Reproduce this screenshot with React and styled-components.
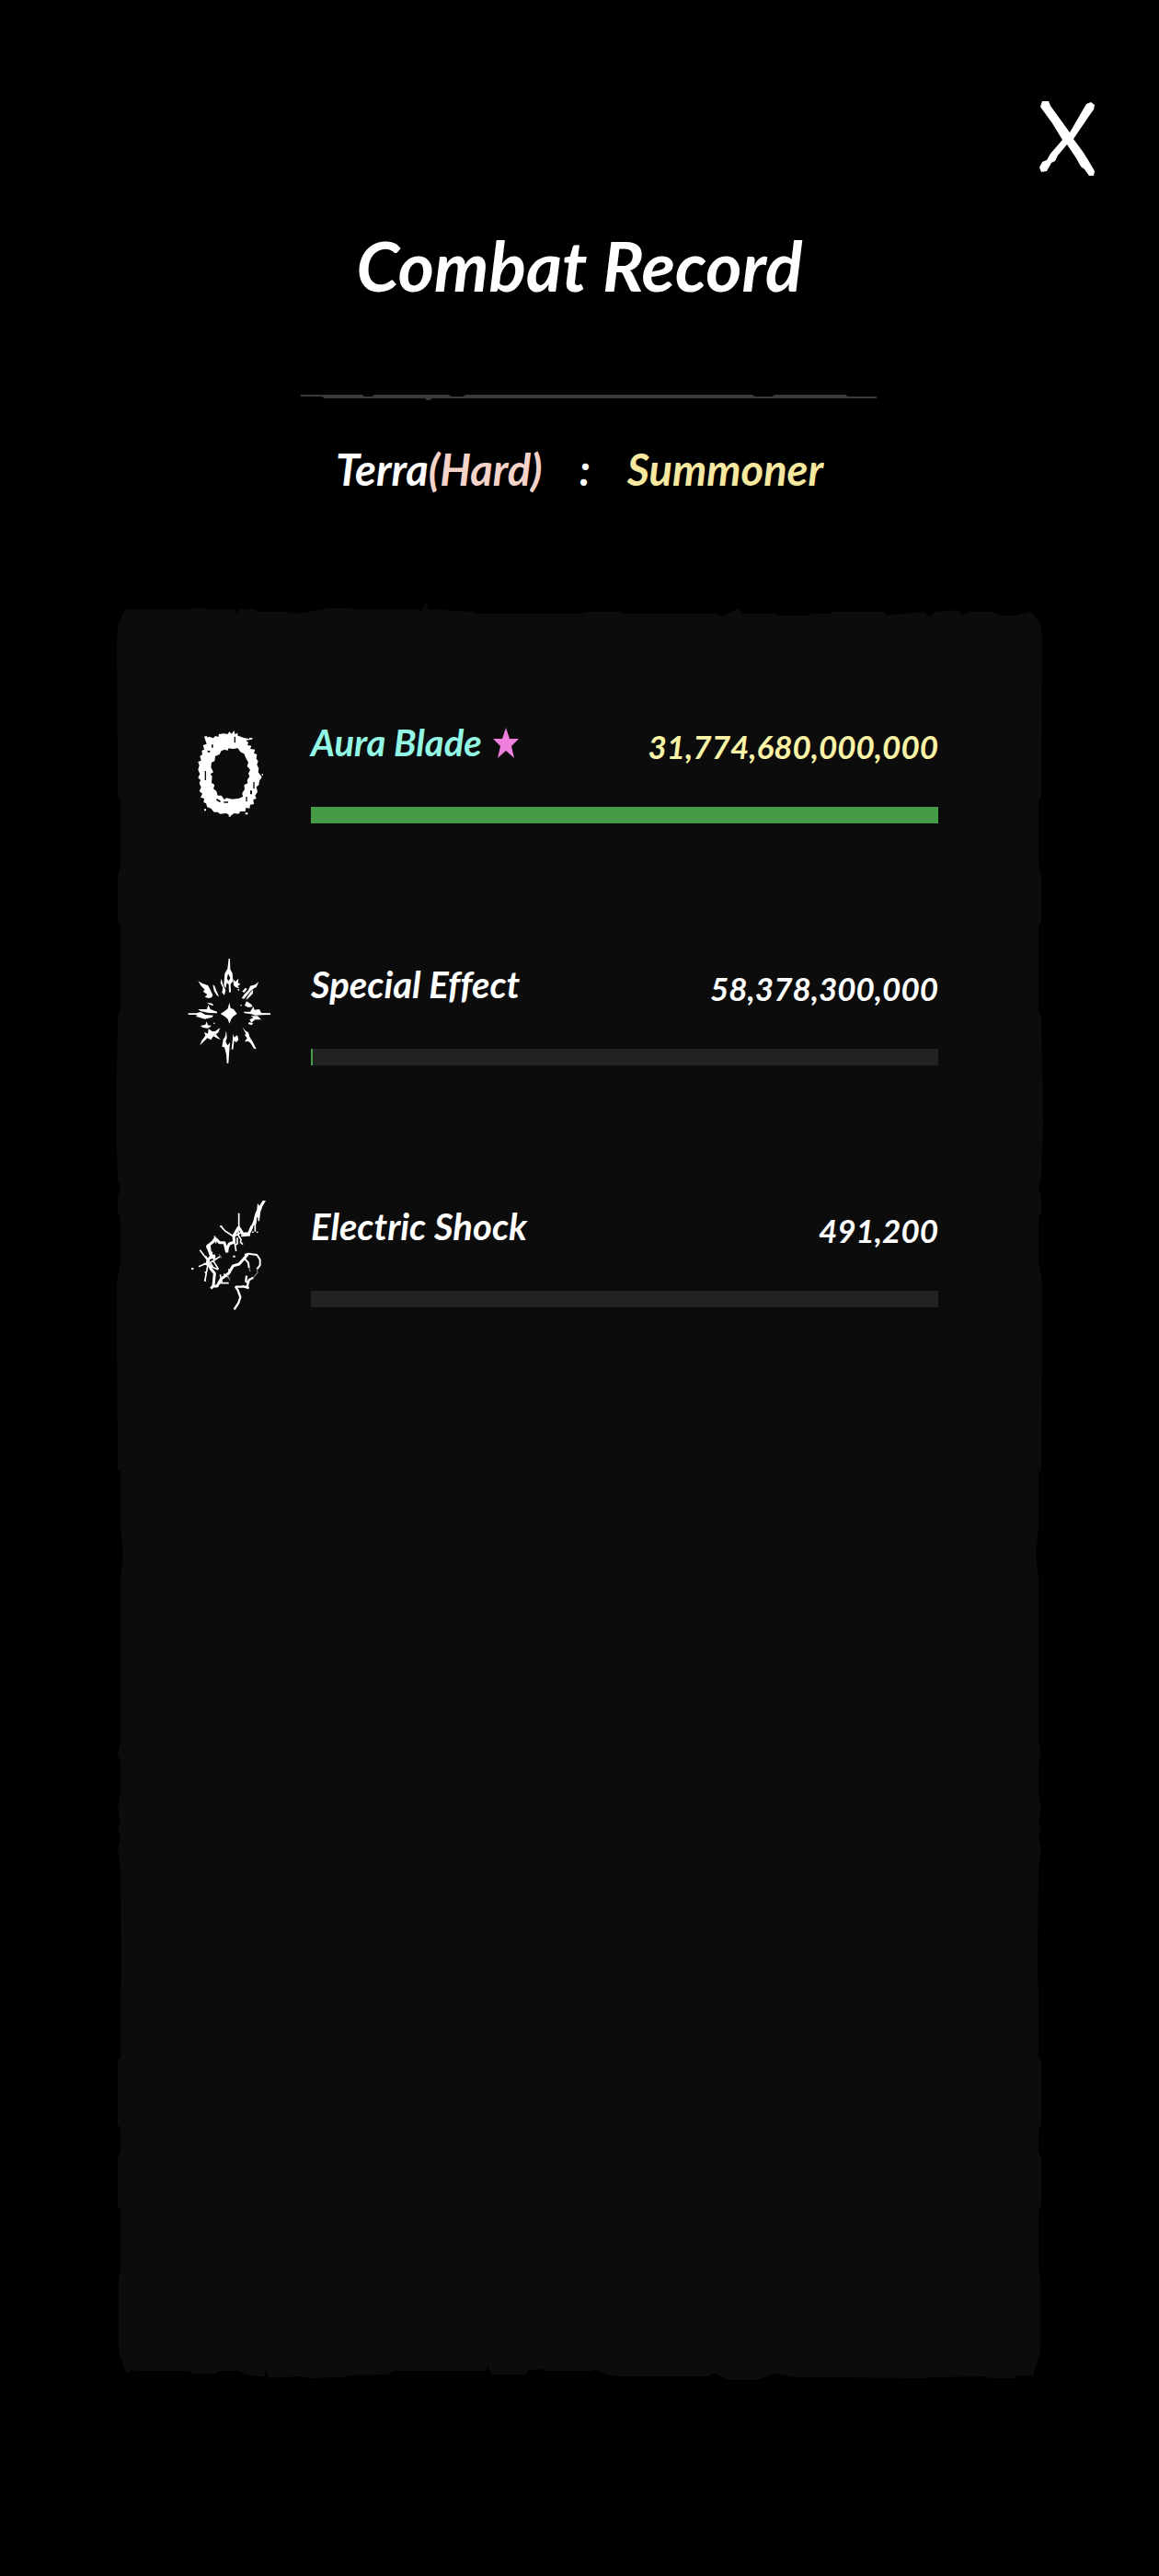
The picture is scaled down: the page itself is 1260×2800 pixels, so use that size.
import React from 'react';
import styled, { createGlobalStyle } from 'styled-components';

const records = [
  { name: 'Aura Blade', damage: 31774680000000, icon: 'aura', best: true },
  { name: 'Special Effect', damage: 58378300000, icon: 'burst' },
  { name: 'Electric Shock', damage: 491200, icon: 'shock' },
];

// Torn paper outline: [percent along the edge, px cut in from it]
const topEdge = [
  [1, 7], [8, 7], [9, 6], [10, 7], [12.9, 7], [13, 12], [13.3, 7], [15, 7],
  [15.3, 10], [18.2, 10], [19.4, 12], [21.4, 9], [23.1, 6], [24.9, 6],
  [25.2, 7], [32.6, 7], [32.9, 11], [33.4, 0], [33.7, 7], [38.6, 10],
  [38.7, 12], [50.3, 12], [50.4, 10], [54.5, 10], [54.7, 12], [64.9, 12],
  [65.3, 15], [67.2, 6], [67.5, 12], [71.2, 12], [71.4, 14], [74.8, 14],
  [75, 12], [77.1, 12], [77.3, 10], [82.9, 10], [83.1, 14], [87.2, 10],
  [87.7, 16], [88.4, 10], [90.9, 8], [91.2, 15], [91.9, 10], [94.4, 10],
  [95.6, 14], [97.1, 14], [98.7, 10],
];

const bottomEdge = [
  [1, 10], [1.4, 8], [1.7, 12], [2, 10], [7.9, 10], [8.2, 7], [10.9, 7],
  [11.2, 10], [13.4, 10], [13.7, 7], [14.9, 4], [16, 4], [16.2, 12],
  [16.5, 2], [19.7, 4], [21, 2], [24.6, 3], [24.9, 5], [29.3, 6],
  [30, 10], [39.9, 10], [40.1, 16], [40.5, 6], [44.3, 6], [44.5, 11],
  [46.2, 12], [46.4, 10], [51.4, 10], [51.6, 12], [53, 6], [54.4, 4],
  [63.9, 4], [64.4, 8], [66.2, 0], [69.1, 0], [71.1, 7], [73.4, 3],
  [87.2, 2], [87.7, 3], [93.8, 4], [94.2, 2], [96.9, 2], [97.1, 5],
  [98.9, 4],
];

const sideEdge = [
  [1.2, 3], [2, 1], [11, 2], [11.1, 5], [14.8, 5], [15.4, 2], [18, 2],
  [18.2, 5], [22.9, 5], [23.3, 2], [29.2, 0], [32.4, 2], [32.9, 5],
  [33.4, 2], [34.3, 2], [34.6, 5], [37.2, 5], [38.2, 1], [41.4, 1],
  [48.8, 2], [48.9, 5], [52, 5], [53.6, 8], [54.8, 5], [64.1, 5],
  [64.8, 2], [65.2, 5], [67, 5], [67.8, 2], [68.7, 5], [68.9, 2],
  [69.5, 5], [70.1, 2], [71.2, 5], [77.2, 6], [78.2, 5], [81.9, 5],
  [82, 2], [85.6, 2], [85.9, 5], [87.2, 5], [87.5, 2], [90.2, 2],
  [90.4, 5], [93.9, 5], [94.2, 3], [98.4, 3],
];

const tornOutline = [
  ...topEdge.map(([x, y]) => `${x}% ${y}px`),
  ...sideEdge.map(([y, x]) => `calc(100% - ${x}px) ${y}%`),
  ...[...bottomEdge].reverse().map(([x, y]) => `${x}% calc(100% - ${y}px)`),
  ...[...sideEdge].reverse().map(([y, x]) => `${x}px ${y}%`),
].join(', ');

const AuraIcon = () => (
  <RecordIcon viewBox="42 27 270 360" aria-hidden="true">
    <path
      fillRule="evenodd"
      d="M112 92L125 97L133 90L142 93L144 84L160 82L172 84L178 76L185 83L194 72L196 84L206 80L204 88L215 92L226 96L252 101L232 104L240 112L237 120L250 122L246 132L262 134L258 146L268 150L266 164L272 172L268 184L274 196L272 208L284 224L276 236L274 250L266 256L270 272L262 284L266 294L256 298L258 312L246 314L244 326L232 324L230 336L214 336L208 344L194 342L182 350L168 342L148 344L140 338L128 338L118 326L106 322L102 310L94 306L96 294L84 290L90 278L80 270L86 258L80 244L84 234L76 226L82 214L76 200L80 186L76 174L86 170L82 156L90 150L88 138L96 134L92 120L104 116L98 98Z
      M172 138L176 130L188 132L206 130L214 142L226 148L232 162L240 176L236 188L246 200L240 212L244 222L236 234L238 244L226 250L228 264L220 276L222 288L208 294L188 296L168 292L162 298L152 284L140 284L136 270L126 262L130 250L120 242L122 222L116 214L126 208L118 192L120 176L130 172L132 156L146 150L152 138L164 134Z
      M98 204h4v30h-4zM107 138h8v5h-8zM120 118h5v10h-5zM194 92h4v20h-4zM256 240h4v22h-4zM246 268h6v12h-6zM232 288h4v16h-4zM138 294l12 8l-3 5l-12 -8zM160 304h14v4h-14z"
    />
    <path d="M97 91h9v7h-9zM96 328h6v6h-6zM230 340h8v6h-8zM284 214h4v5h-4zM176 348h6v5h-6zM243 96h10v5h-10z" />
  </RecordIcon>
);

const BurstIcon = () => (
  <RecordIcon viewBox="42 63 270 360" aria-hidden="true">
    <path d="M178 206L182 224L192 228L203 243L190 252L184 260L178 275L173 260L164 252L149 243L164 233L173 226Z" />
    <path d="M176 62h4L181 98L188 110L190 136L182 146L183 172L177 174L176 148L170 142L166 160L160 150L163 112L172 96ZM174 112L170 128L176 136L181 126Z" fillRule="evenodd" />
    <path d="M152 128L158 150L166 166L162 182L154 174L157 158L149 142ZM190 130L198 138L208 128L206 142L214 146L206 152L210 160L198 156L192 150Z" />
    <path d="M76 136L90 144L108 150L116 164L124 182L120 190L110 192L98 188L106 180L92 170L98 164L86 152ZM124 148L130 152L136 168L144 186L138 184L128 168Z" />
    <path d="M274 138L266 156L258 160L246 170L236 182L226 194L218 192L228 178L240 166L246 152L262 148ZM256 164L254 178L242 190L232 198L236 188L246 174ZM220 170L230 158L236 162L226 174Z" />
    <path d="M234 202L250 212L254 220L240 222L228 216ZM106 206l16 3l2 6l-12 -3z" />
    <path d="M76 228L104 228L110 214L116 228L138 236L138 241L110 240L84 234ZM44 241L70 241L84 237L100 246L126 248L122 254L98 260L84 256L70 252L72 246L44 246Z" />
    <path d="M224 236L246 236L256 220L260 230L276 228L282 240L312 241L312 246L284 247L262 248L250 244L228 241ZM248 250L270 250L282 262L262 262L250 272L244 262L256 256Z" />
    <path d="M84 282L100 278L104 268L108 280L120 282L108 290L92 288ZM242 270l14 4l-6 6l-10 -4z" />
    <path d="M148 288L142 304L134 310L150 328L136 322L126 316L118 328L106 322L98 330L82 346L88 330L100 314L96 302L108 308L110 292L122 300L132 300Z" />
    <path d="M220 286L230 298L240 304L244 318L254 334L266 358L258 356L248 340L240 332L228 334L236 322L228 312L232 308Z" />
    <path d="M168 298L170 322L166 334L172 346L180 336L178 362L175 404L170 404L168 376L162 352L154 350L158 326L164 318ZM190 308L194 320L204 312L208 328L200 336L194 330L190 360L185 358L188 334Z" />
    <path d="M118 212h8v3h-8zM206 162h4v5h-4zM126 272h5v3h-5zM214 214h5v3h-5z" />
  </RecordIcon>
);

const ShockIcon = () => (
  <RecordIcon viewBox="42 69 270 360" aria-hidden="true">
    <path d="M290 64L297 69L286 88L279 108L277 128L268 122L266 144L256 152L250 170L243 166L256 136L262 112L268 98L270 78L276 86Z" />
    <Bolt $width={9} d="M252 152L242 176L222 178L214 164L208 156L192 184L194 204L178 210L172 222L170 238M170 238L162 206L146 206L132 192L124 204L106 218L116 240L130 260" />
    <Bolt $width={5} d="M209 110L209 160M150 152L164 168L192 186M206 156L208 184L216 196L214 208M194 198L200 234M216 206L222 212M192 186L220 172M204 190L204 210L196 214M216 184L246 182M262 140L262 170M272 90L274 136M254 170L256 174M268 170L270 174M130 184L134 208" />
    <Bolt $width={9} d="M132 248L112 258L106 268L118 292L130 306L126 346L118 356M124 348L138 348L150 326L176 306L190 282L210 276L228 256L238 244M112 214L116 246" />
    <Bolt $width={5} d="M82 230L106 262M78 284L106 272M108 278L98 332M94 274L142 294M110 262L122 236M118 270L150 250M148 310L154 336M146 338L176 338M160 308L174 318M126 266L142 292M100 250L124 284M176 292L180 306" />
    <Bolt $width={6} d="M226 256L240 272L242 288M228 246L240 242L268 246L278 262L278 280L268 292" />
    <Bolt $width={4} $faint d="M268 292L270 304L256 320M242 288L246 300M152 256L144 244M172 312L180 328" />
    <Bolt $width={7} d="M256 320L242 328L236 350L198 350L206 362L214 384L208 402L194 424M234 314L232 332L242 338M220 348L242 354" />
    <path d="M54 288h7v6h-7zM190 248h7v6h-7zM148 150h6v6h-6zM98 300h5v6h-5zM96 326h5v6h-5z" />
  </RecordIcon>
);

const icons = { aura: AuraIcon, burst: BurstIcon, shock: ShockIcon };

const App = () => {
  const highest = Math.max(...records.map((record) => record.damage));

  return (
    <Page>
      <GlobalStyle />
      <CloseButton type="button" aria-label="Close">
        <svg width="64" height="88" viewBox="0 0 64 88" aria-hidden="true">
          <path d="M4 4L11 4L13 9L34 38L52 7L57 5L61 8L60 13L55 20L38 45L49 60L57 73L61 80L60 85L55 85L50 78L46 75L41 66L31 51L21 63L18 69L14 71L9 80L3 81L1 76L4 70L9 68L13 61L26 46L15 28L7 17L2 10Z" />
        </svg>
      </CloseButton>
      <Title>Combat Record</Title>
      <Divider viewBox="0 0 626 8" aria-hidden="true">
        <path d="M0 2h67l2 2h8l3-2h81l3 2h12l3-2h312l3 2h18l3-2h77l3 2h31v2H143l-3 2h-3l-2-2H26l-3-2L0 4z" />
      </Divider>
      <Stage>
        <span>
          Terra<Difficulty>(Hard)</Difficulty>
        </span>
        <span>:</span>
        <JobName>Summoner</JobName>
      </Stage>
      <Panel>
        {records.map((record) => {
          const Icon = icons[record.icon];
          const share = (record.damage / highest) * 100;
          return (
            <RecordRow key={record.name}>
              <Icon />
              <RecordBody>
                <RecordHead>
                  <RecordName $best={record.best}>
                    {record.name}
                    {record.best && (
                      <Star viewBox="0 0 28 33" aria-hidden="true">
                        <path d="M14 0L18 12L28 12L20 20L23 33L14 25L5 33L8 20L0 12L10 12Z" />
                      </Star>
                    )}
                  </RecordName>
                  <Damage $best={record.best}>{record.damage.toLocaleString('en-US')}</Damage>
                </RecordHead>
                <Track role="progressbar" aria-label={record.name} aria-valuenow={Math.round(share)}>
                  <Fill $sliver={share > 0.1} style={{ width: `${share}%` }} />
                </Track>
              </RecordBody>
            </RecordRow>
          );
        })}
      </Panel>
    </Page>
  );
};

export default App;

const GlobalStyle = createGlobalStyle`
  * {
    box-sizing: border-box;
  }

  body {
    margin: 0;
    background: #000000;
  }
`;

const Page = styled.main`
  display: flex;
  flex-direction: column;
  align-items: center;
  min-height: 100vh;
  padding: 106px 0 213px;
  color: #ffffff;
  font-family: Lato, sans-serif;
  font-weight: 700;
  font-style: italic;
  font-variant-ligatures: none;
`;

const CloseButton = styled.button`
  align-self: flex-end;
  height: 88px;
  margin-right: 67px;
  padding: 0;
  border: 0;
  background: none;
  cursor: pointer;

  svg {
    display: block;
    fill: #ffffff;
  }
`;

const Title = styled.h1`
  margin: 54px 0 99px;
  font-size: 75px;
  line-height: 80px;
`;

const Divider = styled.svg`
  width: 50%;
  height: 8px;
  margin-left: 20px;
  fill: #3a3a3a;
`;

const Stage = styled.div`
  display: flex;
  gap: 40px;
  margin: 45px 0 115px;
  font-size: 47px;
  line-height: 60px;
`;

const Difficulty = styled.span`
  color: #f6d3c8;
`;

const JobName = styled.span`
  color: #f7e8a0;
`;

const Panel = styled.section`
  display: flex;
  flex: 1;
  flex-direction: column;
  gap: 143px;
  width: 80%;
  padding: 124px 114px 124px 78px;
  background: #0c0c0c;
  clip-path: polygon(${tornOutline});
`;

const RecordRow = styled.article`
  display: flex;
  align-items: center;
  gap: 44px;
`;

const RecordIcon = styled.svg`
  flex: none;
  width: 90px;
  height: 120px;
  fill: #ffffff;
`;

const Bolt = styled.path`
  fill: none;
  stroke: ${(props) => (props.$faint ? '#777777' : '#ffffff')};
  stroke-width: ${(props) => props.$width};
  stroke-linejoin: bevel;
`;

const RecordBody = styled.div`
  flex: 1;
`;

const RecordHead = styled.div`
  display: flex;
  align-items: flex-end;
  justify-content: space-between;
  margin-bottom: 46px;
`;

const RecordName = styled.h2`
  display: flex;
  align-items: center;
  gap: 12px;
  margin: 0;
  color: ${(props) => (props.$best ? '#92f7e4' : '#ffffff')};
  font-size: 40px;
  line-height: 48px;
`;

const Star = styled.svg`
  width: 28px;
  height: 33px;
  fill: #ee7fdd;
`;

const Damage = styled.span`
  color: ${(props) => (props.$best ? '#fbf3a6' : '#ffffff')};
  font-size: 35px;
  line-height: 40px;
`;

const Track = styled.div`
  height: 18px;
  background: #222222;
`;

const Fill = styled.div`
  min-width: ${(props) => (props.$sliver ? '2px' : '0')};
  height: 100%;
  background: #469b46;
`;
